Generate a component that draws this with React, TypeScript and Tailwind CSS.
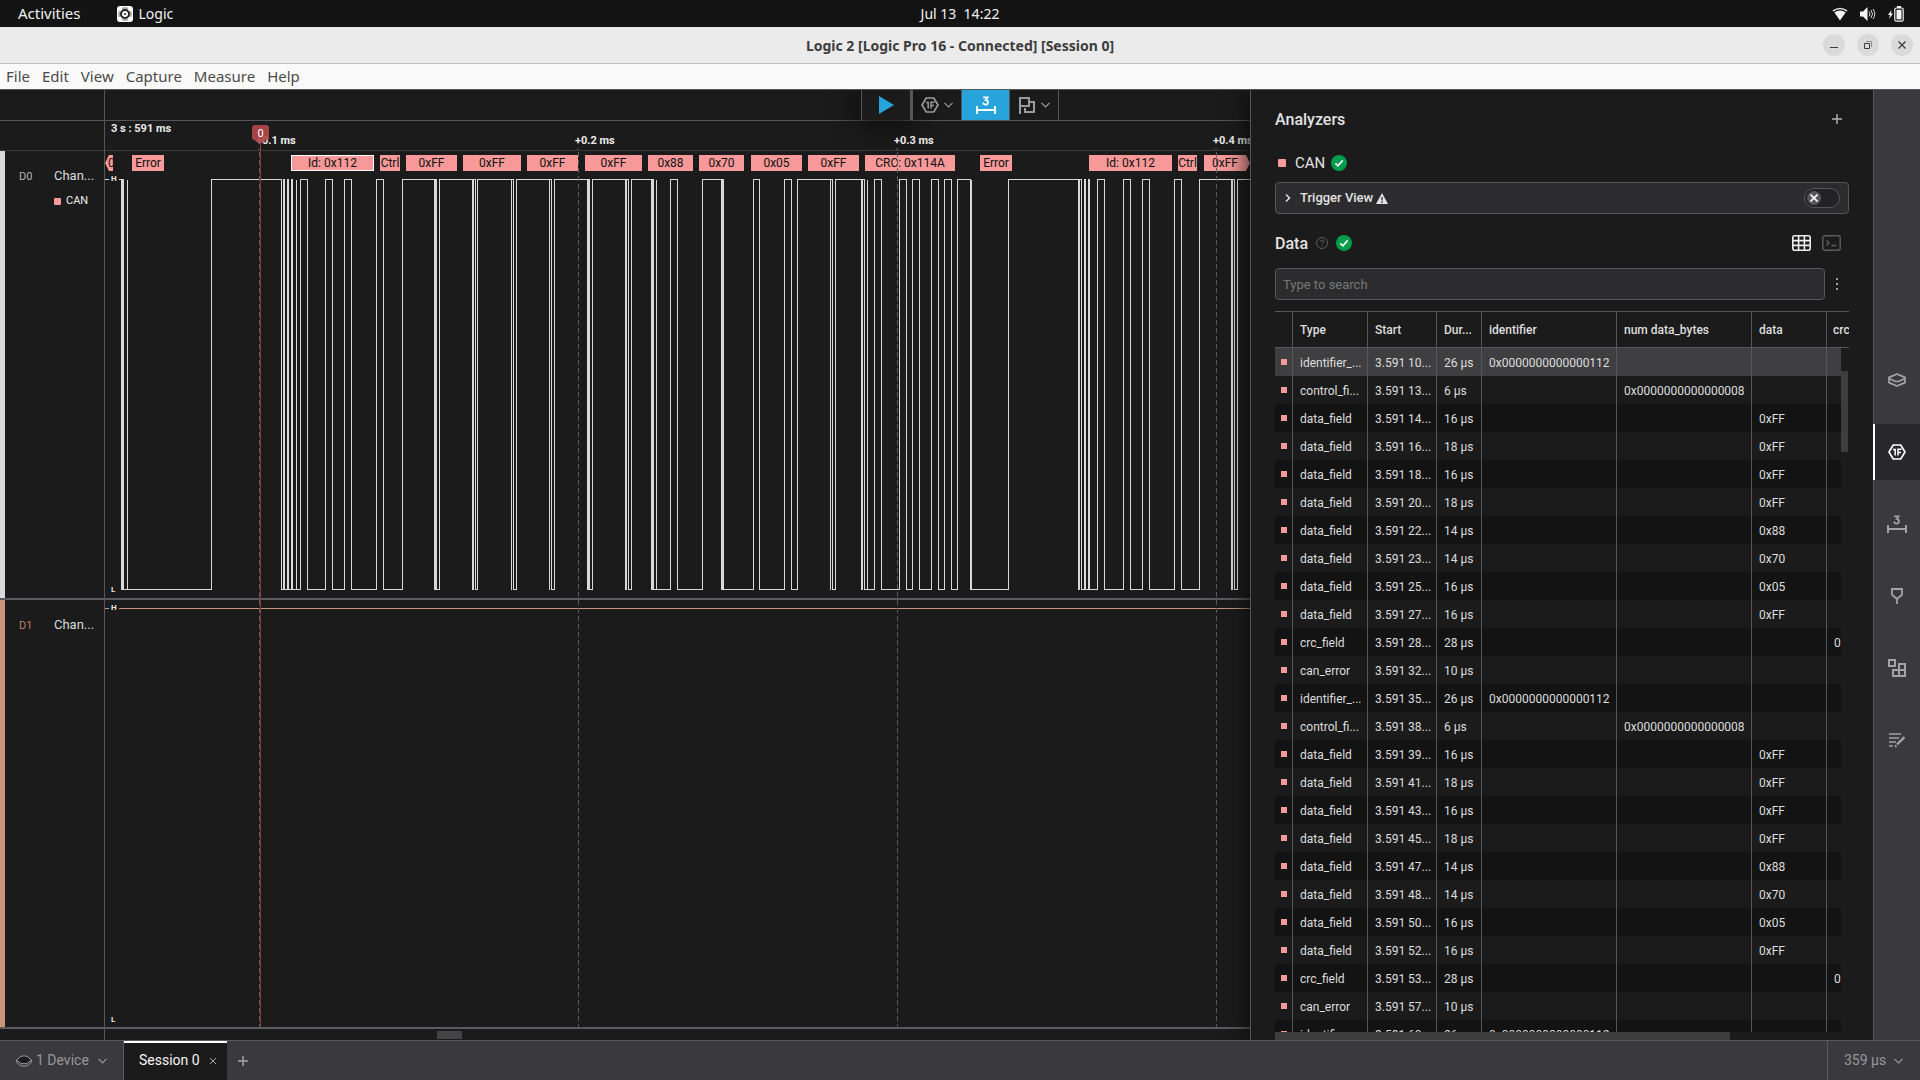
import React from "react";

/* ---------- data ---------- */

// Positions on the time axis, in pixels from the left edge of the graph.
const EDGES = [
  16, 17, 18, 22, 22, 106, 176, 178, 179, 182, 183, 186, 187, 191, 191, 195, 202, 220, 227, 239, 246, 271, 278, 297,
  329, 330, 331, 334, 367, 368, 370, 372, 406, 406, 408, 411, 444, 444, 446, 449, 482, 483, 484, 487, 520, 521, 523, 526,
  546, 547, 548, 551, 551, 565, 572, 597, 616, 617, 618, 648, 654, 679, 686, 692, 725, 725, 727, 730, 756, 757, 759, 762,
  762, 769, 776, 794, 801, 807, 814, 826, 833, 839, 846, 852, 865, 866, 866, 903, 973, 974, 976, 979, 980, 983, 984, 992,
  999, 1018, 1025, 1037, 1044, 1069, 1076, 1094, 1126, 1127, 1129, 1132,
];

type Bubble = { x: number; w: number; text: string; selected?: boolean; cut?: "left" | "right" };

const BUBBLES: Bubble[] = [
  { x: 0, w: 8, text: "0xFF", cut: "left" },
  { x: 27, w: 32, text: "Error" },
  { x: 186, w: 83, text: "Id: 0x112", selected: true },
  { x: 275, w: 20, text: "Ctrl" },
  { x: 301, w: 51, text: "0xFF" },
  { x: 358, w: 58, text: "0xFF" },
  { x: 422, w: 51, text: "0xFF" },
  { x: 480, w: 57, text: "0xFF" },
  { x: 543, w: 45, text: "0x88" },
  { x: 594, w: 45, text: "0x70" },
  { x: 646, w: 51, text: "0x05" },
  { x: 703, w: 51, text: "0xFF" },
  { x: 760, w: 90, text: "CRC: 0x114A" },
  { x: 875, w: 32, text: "Error" },
  { x: 984, w: 83, text: "Id: 0x112" },
  { x: 1073, w: 19, text: "Ctrl" },
  { x: 1099, w: 46, text: "0xFF", cut: "right" },
];

const TICKS = [
  { x: 154, label: "+0.1 ms" },
  { x: 473, label: "+0.2 ms" },
  { x: 792, label: "+0.3 ms" },
  { x: 1111, label: "+0.4 ms" },
];

const ID = "0x0000000000000112";
const NUM = "0x0000000000000008";

const ROWS: [string, string, string, string, string, string, string][] = [
  ["identifier_...", "3.591 10...", "26 μs", ID, "", "", ""],
  ["control_fi...", "3.591 13...", "6 μs", "", NUM, "", ""],
  ["data_field", "3.591 14...", "16 μs", "", "", "0xFF", ""],
  ["data_field", "3.591 16...", "18 μs", "", "", "0xFF", ""],
  ["data_field", "3.591 18...", "16 μs", "", "", "0xFF", ""],
  ["data_field", "3.591 20...", "18 μs", "", "", "0xFF", ""],
  ["data_field", "3.591 22...", "14 μs", "", "", "0x88", ""],
  ["data_field", "3.591 23...", "14 μs", "", "", "0x70", ""],
  ["data_field", "3.591 25...", "16 μs", "", "", "0x05", ""],
  ["data_field", "3.591 27...", "16 μs", "", "", "0xFF", ""],
  ["crc_field", "3.591 28...", "28 μs", "", "", "", "0"],
  ["can_error", "3.591 32...", "10 μs", "", "", "", ""],
  ["identifier_...", "3.591 35...", "26 μs", ID, "", "", ""],
  ["control_fi...", "3.591 38...", "6 μs", "", NUM, "", ""],
  ["data_field", "3.591 39...", "16 μs", "", "", "0xFF", ""],
  ["data_field", "3.591 41...", "18 μs", "", "", "0xFF", ""],
  ["data_field", "3.591 43...", "16 μs", "", "", "0xFF", ""],
  ["data_field", "3.591 45...", "18 μs", "", "", "0xFF", ""],
  ["data_field", "3.591 47...", "14 μs", "", "", "0x88", ""],
  ["data_field", "3.591 48...", "14 μs", "", "", "0x70", ""],
  ["data_field", "3.591 50...", "16 μs", "", "", "0x05", ""],
  ["data_field", "3.591 52...", "16 μs", "", "", "0xFF", ""],
  ["crc_field", "3.591 53...", "28 μs", "", "", "", "0"],
  ["can_error", "3.591 57...", "10 μs", "", "", "", ""],
  ["identifier_...", "3.591 60...", "26 μs", ID, "", "", ""],
];

/* ---------- icons ---------- */

const HexIcon = ({ className = "" }: { className?: string }) => (
  <svg viewBox="0 0 18 16" className={`h-4 w-[18px] ${className}`} fill="none" stroke="currentColor" aria-hidden="true">
    <path d="M5.2 1h7.6L17 8l-4.2 7H5.2L1 8z" strokeWidth="1.7" />
    <path d="M5 5.6h2.2v6M10 11.6V5.2h3.6M10 8.4h3" strokeWidth="1.5" />
  </svg>
);

const MeasureIcon = ({ className = "" }: { className?: string }) => (
  <svg viewBox="0 0 20 18" className={`h-[18px] w-5 ${className}`} fill="none" stroke="currentColor" aria-hidden="true">
    <path d="M7.2 1.400h4.400L9.700 3.900c2.800 0 3.100 4.700 0 4.700-1.500 0-2.400-.7-2.600-1.900" strokeWidth="1.7" />
    <path d="M1 10v8M19 10v8M1 14h18" strokeWidth="2" />
  </svg>
);

const FlagIcon = () => (
  <svg viewBox="0 0 18 18" className="h-[18px] w-[18px]" fill="none" stroke="currentColor" strokeWidth="2" aria-hidden="true">
    <path d="M2 18V2h9v8H2M11 6h5v10H7v-4" />
  </svg>
);

const ChevronDown = () => (
  <svg viewBox="0 0 9 6" className="h-1.5 w-[9px]" fill="none" stroke="currentColor" strokeWidth="1.2" aria-hidden="true">
    <path d="M.5 .8l4 4 4-4" />
  </svg>
);

const PlusIcon = () => (
  <svg viewBox="0 0 10 10" className="h-2.5 w-2.5" stroke="currentColor" strokeWidth="1.4" aria-hidden="true">
    <path d="M5 0v10M0 5h10" />
  </svg>
);

const DeviceIcon = ({ className = "" }: { className?: string }) => (
  <svg viewBox="0 0 18 14" className={`h-3.5 w-[18px] ${className}`} fill="none" stroke="currentColor" strokeWidth="1.7" strokeLinejoin="round" aria-hidden="true">
    <path d="M1 4.400L9 1l8 3.400v1L11.500 8q-2.500 1-5 0L1 5.400z" />
    <path d="M1 4.800v4.800L9 13l8-3.400V4.800" />
  </svg>
);

const FlatDeviceIcon = () => (
  <svg viewBox="0 0 16 12" className="h-3 w-4" fill="none" stroke="currentColor" strokeLinejoin="round" aria-hidden="true">
    <path d="M.6 5l4.400-3.600q3-1 6 0L15.400 5l-4 3.200q-3.400 1.200-6.800 0z" fill="#1b1b1b" />
    <path d="M.6 5v2.400l4 3.200q3.400 1.200 6.800 0l4-3.200V5" />
  </svg>
);

const CheckBadge = () => (
  <svg viewBox="0 0 16 16" className="h-4 w-4" aria-label="OK" role="img">
    <circle cx="8" cy="8" r="8" fill="#019c4c" />
    <path d="M4.300 8.300l2.600 2.600 4.800-5.500" fill="none" stroke="#fff" strokeWidth="1.6" />
  </svg>
);

/* ---------- desktop chrome ---------- */

const DesktopBar = () => (
  <header className="relative flex h-[27px] shrink-0 items-center justify-between bg-[#131313] px-4 font-['Noto_Sans',sans-serif] text-[14px] text-[#f2f2f2]">
    <div className="flex items-center">
      <button className="pl-0.5 text-[15px]">Activities</button>
      <div className="ml-9 flex items-center gap-1.5">
        <svg viewBox="0 0 16 16" className="h-4 w-4" aria-hidden="true">
          <rect width="16" height="16" rx="3" fill="#fff" />
          <circle cx="8" cy="8" r="4" fill="none" stroke="#222" strokeWidth="2" />
          <path d="M6 1.500v2M8 1v2M10 1.500v2M6 12.500v2M8 13v2M10 12.500v2M1.500 6h2M1 8h2M1.500 10h2M12.500 6h2M13 8h2M12.500 10h2" stroke="#222" strokeWidth=".8" />
          <circle cx="8" cy="8" r="1" fill="#222" />
        </svg>
        <span>Logic</span>
      </div>
    </div>
    <time className="absolute left-1/2 -translate-x-1/2 whitespace-pre">Jul 13  14:22</time>
    <div className="flex items-center gap-3">
      <svg viewBox="0 0 16 14" className="h-3.5 w-4" aria-label="Wi-Fi" role="img">
        <path d="M1 4q7-5 14 0" fill="none" stroke="#ddd" strokeWidth="1.600" />
        <path d="M2.400 5.400q5.600-3.600 11.200 0L8 13.500z" fill="#f5f5f5" />
      </svg>
      <svg viewBox="0 0 16 14" className="h-3.5 w-4" aria-label="Volume" role="img">
        <path d="M0 4.500h3L7.500 0v14L3 9.500H0z" fill="#f5f5f5" />
        <path d="M9 4.500q2 2.500 0 5M11 3q3 4 0 8M13 2q3.600 5 0 10" fill="none" stroke="#ddd" />
      </svg>
      <svg viewBox="0 0 16 16" className="h-4 w-4" aria-label="Battery charging" role="img">
        <path d="M3.500 4L0 9h2l-1 4 4-5.500H3z" fill="#f5f5f5" />
        <path d="M9 0h4v2H9z" fill="#f5f5f5" />
        <rect x="6.800" y="2" width="8.400" height="13.200" rx="1.500" fill="none" stroke="#f5f5f5" strokeWidth="1.200" />
        <rect x="8.500" y="3.800" width="5" height="9.600" fill="#f5f5f5" />
      </svg>
    </div>
  </header>
);

const TitleBar = () => (
  <div className="relative flex h-[37px] shrink-0 items-center justify-center border-b border-[#bdbdbd] bg-[#ebebeb]">
    <h1 className="font-['Noto_Sans',sans-serif] text-[14px] font-bold text-[#3d3d3d]">
      Logic 2 [Logic Pro 16 - Connected] [Session 0]
    </h1>
    <div className="absolute inset-y-0 right-[7px] flex items-center gap-3">
      <button aria-label="Minimize" className="grid h-[22px] w-[22px] place-items-center rounded-full bg-[#dadada]">
        <svg viewBox="0 0 8 8" className="h-2 w-2"><path d="M0 6h8v1H0z" fill="#3d3d3d" /></svg>
      </button>
      <button aria-label="Restore" className="grid h-[22px] w-[22px] place-items-center rounded-full bg-[#dadada]">
        <svg viewBox="0 0 8 8" className="h-2 w-2" fill="none">
          <path d="M2 .500h5.500V6" stroke="#8a8a8a" />
          <path d="M.500 2.500h5v5h-5z" stroke="#3d3d3d" />
        </svg>
      </button>
      <button aria-label="Close" className="grid h-[22px] w-[22px] place-items-center rounded-full bg-[#dadada]">
        <svg viewBox="0 0 8 8" className="h-2 w-2"><path d="M.500 .500l7 7M7.500 .500l-7 7" stroke="#3d3d3d" strokeWidth="1.300" /></svg>
      </button>
    </div>
  </div>
);

const MenuBar = () => (
  <nav className="flex h-[26px] shrink-0 items-center gap-3 border-b border-[#57575b] bg-[#fafafa] px-1.5 font-['Noto_Sans',sans-serif] text-[15px] text-[#4a4a4a]">
    {["File", "Edit", "View", "Capture", "Measure", "Help"].map((m) => (
      <button key={m}>{m}</button>
    ))}
  </nav>
);

/* ---------- graph ---------- */

const Toolbar = () => (
  <div className="flex h-[31px] shrink-0 justify-end border-b border-[#55555a] pr-[191px] text-[#9b9b9b]">
    <button aria-label="Start capture" className="grid w-[49px] place-items-center border-l border-[#55555a] bg-[#1b1b1b] shadow-[0_0_28px_4px_#0c0c0c]">
      <svg viewBox="0 0 15 18" className="h-[18px] w-[15px]" aria-hidden="true"><path d="M0 0l15 9L0 18z" fill="#27a4dc" /></svg>
    </button>
    <button aria-label="Analyzer options" className="z-10 flex w-[52px] items-center justify-center gap-[5px] border-r border-l-3 border-[#55555a]">
      <HexIcon />
      <ChevronDown />
    </button>
    <button aria-label="Measurements" className="grid w-[47px] place-items-center bg-[#27a4dc] text-white">
      <MeasureIcon />
    </button>
    <button aria-label="Marker options" className="flex w-[50px] items-center justify-center gap-[5px] border-x border-[#55555a]">
      <FlagIcon />
      <ChevronDown />
    </button>
  </div>
);

const Timeline = () => (
  <div className="relative h-[30px] shrink-0 border-b border-[#37373c] text-[11px] font-bold leading-[14px] text-[#ececec]">
    <span className="absolute left-1.5 top-px">3 s : 591 ms</span>
    {TICKS.map((t) => (
      <div key={t.label} className="absolute top-[13px] whitespace-nowrap" style={{ left: t.x - 3 }}>
        <span>{t.label}</span>
        <i className="ml-0.5 block h-[3px] w-0.5 bg-[#3c3c40]" />
      </div>
    ))}
  </div>
);

const Level = ({ children, top }: { children: string; top: string }) => (
  <span className={`absolute left-1 rounded bg-[#1b1b1b] px-0.5 text-[8px] leading-[8px] font-bold text-[#e8e8e8] ${top}`}>{children}</span>
);

const Wave = () => {
  const hi = 28;
  const lo = 438;
  let d = `M0 ${hi + 0.5}`;
  EDGES.forEach((x, i) => {
    d += `H${x + 0.5}V${(i % 2 === 0 ? lo : hi) + 0.5}`;
  });
  return (
    <svg className="absolute left-0 top-0 h-[446px] w-[1145px]" fill="none" shapeRendering="crispEdges" role="img" aria-label="Channel 0 signal">
      <path d={`${d}H1145`} stroke="#d9d9d9" strokeWidth="1" />
    </svg>
  );
};

const GraphRow0 = () => (
  <div className="relative h-[449px] shrink-0 overflow-hidden border-b-2 border-[#5a5a5f]">
    <Wave />
    {BUBBLES.map((b) => (
      <div
        key={b.x}
        className={`absolute top-1 flex h-4 overflow-hidden bg-[#f79999] text-[12px] leading-4 whitespace-nowrap text-[#111] ${
          b.selected ? "shadow-[inset_0_0_0_1px_white]" : ""
        } ${
          b.cut === "left"
            ? "justify-start pl-[3px] [clip-path:polygon(4px_0,100%_0,100%_100%,4px_100%,0_50%)]"
            : b.cut === "right"
              ? "justify-center pr-1 [clip-path:polygon(0_0,42px_0,100%_50%,42px_100%,0_100%)]"
              : "justify-center"
        }`}
        style={{ left: b.x, width: b.w }}
      >
        {b.text}
      </div>
    ))}
    <Level top="top-6">H</Level>
    <Level top="top-[435px]">L</Level>
  </div>
);

const Graph = () => (
  <section aria-label="Capture graph" className="relative flex min-w-0 flex-1 flex-col overflow-hidden">
    <div className="flex min-h-0 flex-1">
      <div className="flex w-[105px] shrink-0 flex-col border-r border-[#55555a]">
        <div className="h-[31px] shrink-0 border-b border-[#55555a]" />
        <div className="h-[30px] shrink-0 border-b border-[#37373c]" />
        <div className="flex h-[449px] shrink-0 border-b-2 border-[#5a5a5f]">
          <div className="w-[5px] bg-[#d9d9d9]" />
          <span className="mt-[18px] w-[49px] pl-3.5 text-[11px] leading-4 text-[#b5b5b5]">D0</span>
          <div className="mt-4">
            <div className="text-[13px] leading-[18px] text-[#dcdcdc]">Chan...</div>
            <div className="mt-2 flex items-center gap-[5px] text-[11px] leading-4 text-[#ececec]">
              <i className="h-[7px] w-[7px] rounded-[1px] bg-[#f79999]" />
              CAN
            </div>
          </div>
        </div>
        <div className="flex flex-1 border-b-2 border-[#5a5a5f]">
          <div className="w-[5px] bg-[#c9957c]" />
          <span className="mt-[18px] w-[49px] pl-3.5 text-[11px] leading-4 text-[#b98264]">D1</span>
          <div className="mt-4 text-[13px] leading-[18px] text-[#dcdcdc]">Chan...</div>
        </div>
        <div className="h-[11px]" />
      </div>
      <div className="relative flex min-w-0 flex-1 flex-col overflow-hidden">
        <Toolbar />
        <Timeline />
        <GraphRow0 />
        <div className="relative flex-1 border-b-2 border-[#5a5a5f]">
          <div className="mt-2 h-px bg-[#c9957c]" />
          <Level top="top-1">H</Level>
          <span className="absolute bottom-0.5 left-1 px-0.5 text-[8px] leading-[10px] font-bold text-[#e8e8e8]">L</span>
        </div>
        <div className="h-[11px] pt-0.5">
          <div className="ml-[332px] h-2 w-[25px] bg-[#434345]" />
        </div>
        {TICKS.map((t) => (
          <i
            key={t.label}
            className="pointer-events-none absolute top-[62px] bottom-[13px] w-px bg-[repeating-linear-gradient(#5b5b60_0_5px,transparent_5px_8px)]"
            style={{ left: t.x }}
          />
        ))}
        <i className="pointer-events-none absolute top-[50px] bottom-[13px] left-[155px] w-px bg-[#8a3a38]" />
        <div className="absolute top-[35px] left-[147px] h-[19px] w-[17px] rounded-t-[3px] bg-[#b5484be6] text-center text-[11px] leading-[18px] text-white [clip-path:polygon(0_0,100%_0,100%_72%,50%_100%,0_72%)]">
          0
        </div>
      </div>
    </div>
  </section>
);

/* ---------- analyzer panel ---------- */

const DataTable = () => (
  <div className="relative min-h-0 flex-1 overflow-hidden">
    <table className="w-full table-fixed border-separate border-spacing-0 text-left text-[12px] text-[#dedede]">
      <colgroup>
        <col className="w-[18px]" />
        <col className="w-[75px]" />
        <col className="w-[69px]" />
        <col className="w-[45px]" />
        <col className="w-[135px]" />
        <col className="w-[135px]" />
        <col className="w-[75px]" />
        <col />
      </colgroup>
      <thead>
        <tr className="h-[37px]">
          <th className="border-y border-r border-[#57575b] p-0" aria-label="Analyzer" />
          {["Type", "Start", "Dur...", "identifier", "num data_bytes", "data", "crc"].map((h, i) => (
            <th
              key={h}
              scope="col"
              className={`overflow-hidden border-y border-[#57575b] p-0 font-medium whitespace-nowrap ${i < 6 ? "border-r pl-[7px]" : "pl-1.5"}`}
            >
              {h}
            </th>
          ))}
        </tr>
      </thead>
      <tbody>
        {ROWS.map((r, i) => (
          <tr key={i} className={`h-7 ${i === 0 ? "bg-[#3f3f42]" : i % 2 === 0 ? "bg-[#131313]" : ""}`}>
            <td className="border-r border-[#57575b] p-0 pl-1.5">
              <i className="block h-1.5 w-1.5 bg-[#f79999]" />
            </td>
            {r.map((c, j) => (
              <td key={j} className={`overflow-hidden p-0 pt-0.5 pl-[7px] whitespace-nowrap ${j < 6 ? "border-r border-[#57575b]" : ""}`}>
                {c}
              </td>
            ))}
          </tr>
        ))}
      </tbody>
    </table>
    <div className="absolute top-[37px] right-0 bottom-0 w-2 bg-[#1b1b1b]">
      <div className="mt-[23px] h-[81px] w-[7px] bg-[#3d3d3d]" />
    </div>
    <div className="absolute inset-x-0 bottom-0 h-2 bg-[#1b1b1b]">
      <div className="h-2 w-[455px] bg-[#3d3d3d]" />
    </div>
  </div>
);

const AnalyzerPanel = () => (
  <aside className="relative z-10 flex w-[623px] shrink-0 flex-col border-l border-[#55555a] bg-[#1b1b1b] pr-6 pl-6 shadow-[0_0_24px_#080808] text-[#e2e2e2]">
    <div className="flex h-[58px] shrink-0 items-center justify-between pr-[7px]">
      <h2 className="pt-0.5 text-[16px] font-medium">Analyzers</h2>
      <button aria-label="Add analyzer" className="text-[#b4b4b4]"><PlusIcon /></button>
    </div>
    <div className="flex h-[34px] shrink-0 items-center pb-1 pl-[3px] text-[15px]">
      <i className="h-2 w-2 rounded-[1px] bg-[#f79999]" />
      <span className="mr-1.5 ml-[9px]">CAN</span>
      <CheckBadge />
    </div>
    <div className="flex h-8 shrink-0 items-center rounded-sm border border-[#57575b] bg-[#2c2c2e] pr-2 pl-[9px] text-[13px] font-medium">
      <button className="flex flex-1 items-center gap-[9px]">
        <svg viewBox="0 0 6 8" className="h-2 w-1.5" fill="none" stroke="currentColor" strokeWidth="1.500" aria-hidden="true"><path d="M1 .500L4.500 4 1 7.500" /></svg>
        <span className="flex items-center gap-[3px]">
          Trigger View
          <svg viewBox="0 0 12 11" className="h-[11px] w-3" aria-hidden="true">
            <path d="M6 0l6 11H0z" fill="#e2e2e2" />
            <path d="M6 4v3.500M6 8.500V10" stroke="#2c2c2e" strokeWidth="1.300" />
          </svg>
        </span>
      </button>
      <label className="relative block h-5 w-9 rounded-full border border-[#57575b] bg-[#232325]">
        <input type="checkbox" role="switch" aria-label="Trigger View" className="absolute inset-0 appearance-none" />
        <span className="absolute top-0.5 left-0.5 grid h-3.5 w-3.5 place-items-center rounded-full bg-[#57575b]">
          <svg viewBox="0 0 8 8" className="h-2 w-2"><path d="M.500 .500l7 7M7.500 .500l-7 7" stroke="#fff" strokeWidth="1.600" /></svg>
        </span>
      </label>
    </div>
    <div className="flex h-[54px] shrink-0 items-center justify-between pt-1 pr-2">
      <div className="flex items-center gap-2">
        <h2 className="pt-0.5 text-[16px] font-medium">Data</h2>
        <button aria-label="Help">
          <svg viewBox="0 0 12 12" className="h-3 w-3" fill="none" stroke="#5e5e60" aria-hidden="true">
            <circle cx="6" cy="6" r="5.500" />
            <path d="M4.300 4.600q.2-1.500 1.700-1.500 1.700 0 1.700 1.400 0 .9-1 1.300-.7.400-.7 1.200M6 8.300v1.100" />
          </svg>
        </button>
        <CheckBadge />
      </div>
      <div className="flex items-center gap-[11px]">
        <button aria-label="Table view">
          <svg viewBox="0 0 19 16" className="h-4 w-[19px]" fill="none" stroke="#ededed" strokeWidth="1.600" aria-hidden="true">
            <rect x=".8" y=".8" width="17.400" height="14.400" rx="2" />
            <path d="M6.600 1v14M12.400 1v14M1 5.600h17M1 10.400h17" />
          </svg>
        </button>
        <button aria-label="Terminal view">
          <svg viewBox="0 0 19 16" className="h-4 w-[19px]" fill="none" stroke="#5e5e60" strokeWidth="1.400" aria-hidden="true">
            <rect x=".8" y=".8" width="17.400" height="14.400" rx="2" />
            <path d="M4.500 5.500L7 8l-2.500 2.500M9.500 10.500h5" />
          </svg>
        </button>
      </div>
    </div>
    <div className="flex shrink-0 items-center">
      <input
        type="text"
        aria-label="Search data"
        placeholder="Type to search"
        className="h-8 min-w-0 flex-1 rounded-sm border border-[#57575b] bg-[#2c2c2e] px-[7px] text-[13px] outline-none placeholder:text-[#77777a]"
      />
      <button aria-label="More options" className="grid h-8 w-6 place-items-center text-[#a0a0a0]">
        <svg viewBox="0 0 2 12" className="h-3 w-0.5" fill="currentColor"><path d="M0 0h2v2H0zM0 5h2v2H0zM0 10h2v2H0z" /></svg>
      </button>
    </div>
    <div className="flex min-h-0 flex-1 flex-col pt-[11px]">
      <DataTable />
    </div>
  </aside>
);

/* ---------- right rail and footer ---------- */

const RailButton = ({ label, active, children }: { label: string; active?: boolean; children: React.ReactNode }) => (
  <button
    aria-label={label}
    className={`grid h-14 w-full place-items-center border-l-2 pr-0.5 ${active ? "border-white bg-[#29292b] text-white" : "border-transparent text-[#a3a3a3]"}`}
  >
    {children}
  </button>
);

const Rail = () => (
  <nav aria-label="Panels" className="z-20 w-[47px] shrink-0 border-l border-[#55555a] bg-[#3a393e]">
    <div className="-ml-px flex h-full flex-col justify-center gap-4 pb-[10px]">
      <RailButton label="Device"><DeviceIcon /></RailButton>
      <RailButton label="Analyzers" active><HexIcon /></RailButton>
      <RailButton label="Measurements"><MeasureIcon /></RailButton>
      <RailButton label="Markers">
        <svg viewBox="0 0 12 16" className="h-4 w-3" fill="none" stroke="currentColor" strokeWidth="1.800" aria-hidden="true">
          <path d="M1 1h10v5.800L6 11 1 6.800zM6 11v5" />
        </svg>
      </RailButton>
      <RailButton label="Extensions">
        <svg viewBox="0 0 18 18" className="h-[18px] w-[18px]" fill="none" stroke="currentColor" strokeWidth="2" aria-hidden="true">
          <path d="M1 1h6v6H1zM11 11V5h6v12H5v-6h12M11 11v6" />
        </svg>
      </RailButton>
      <RailButton label="Notes">
        <svg viewBox="0 0 16 16" className="h-4 w-4" fill="none" stroke="currentColor" strokeWidth="1.700" aria-hidden="true">
          <path d="M0 2h12M0 6h10M0 10h7M0 14h4" />
          <path d="M15.500 5L8 12.500M6 14.500l1.500-.500" strokeWidth="2.400" />
        </svg>
      </RailButton>
    </div>
  </nav>
);

const Footer = () => (
  <footer className="flex h-10 shrink-0 items-stretch border-t border-[#5a5a5f] bg-[#3a393e] text-[14px] text-[#98989b]">
    <button className="flex w-[124px] items-center border-r border-[#5a5a5f] pl-4">
      <FlatDeviceIcon />
      <span className="mr-[9px] ml-1">1 Device</span>
      <ChevronDown />
    </button>
    <div className="flex w-[103px] items-center border-t-2 border-white bg-[#1b1b1b] pb-0.5 pl-[15px] text-[#f5f5f5]">
      <button className="whitespace-nowrap">Session 0</button>
      <button aria-label="Close session" className="ml-2.5 text-[#a8a8a8]">
        <svg viewBox="0 0 6 6" className="h-1.5 w-1.5" stroke="currentColor"><path d="M0 0l6 6M6 0L0 6" /></svg>
      </button>
    </div>
    <button aria-label="New session" className="ml-[11px] text-[#a8a8a8]"><PlusIcon /></button>
    <button className="ml-auto flex w-[93px] items-center gap-2 border-l border-[#5a5a5f] pl-4">
      359 μs
      <ChevronDown />
    </button>
  </footer>
);

export default function App() {
  return (
    <div className="flex h-screen flex-col overflow-hidden bg-[#1b1b1b] font-[Roboto,sans-serif]">
      <DesktopBar />
      <TitleBar />
      <MenuBar />
      <main className="flex min-h-0 flex-1 overflow-hidden">
        <Graph />
        <AnalyzerPanel />
        <Rail />
      </main>
      <Footer />
    </div>
  );
}
